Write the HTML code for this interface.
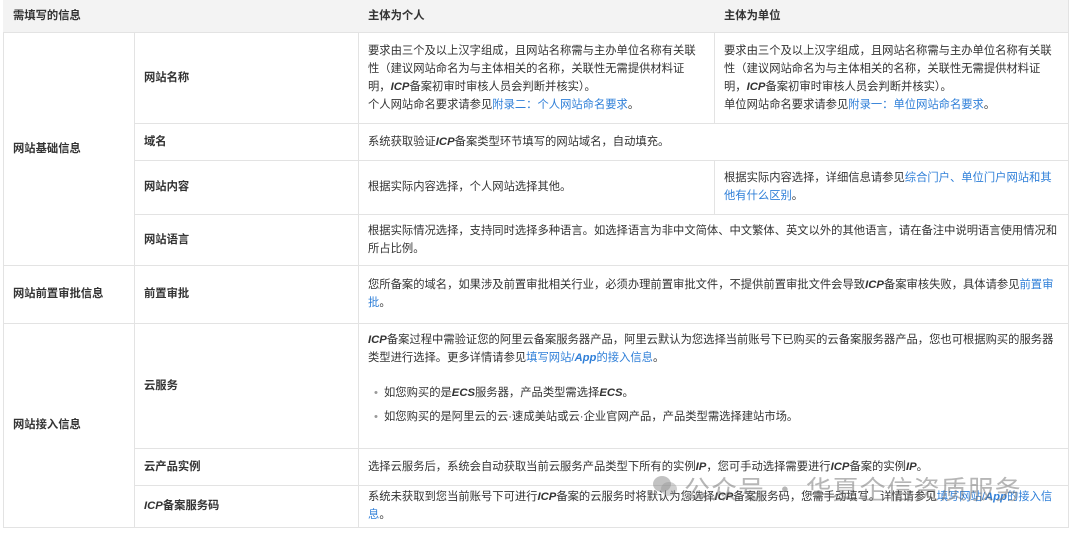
<!DOCTYPE html>
<html><head><meta charset="utf-8"><style>
*{margin:0;padding:0;box-sizing:border-box}
body{width:1080px;height:535px;background:#fff;font-family:"Liberation Sans","Noto Sans CJK SC",sans-serif;font-size:11.3px;color:#333;position:relative;overflow:hidden}
.c{position:absolute;border-right:1px solid #e3e3e3;border-bottom:1px solid #e3e3e3;padding:0 10px;display:flex;align-items:center;line-height:18px}
.c>div{width:100%}
.h{background:#f3f3f3;font-weight:bold;color:#333}
.b{font-weight:bold}
a{color:#2f7fd8;text-decoration:none}
i{font-weight:bold;font-style:italic}
ul{list-style:none;margin-top:17px}
li{position:relative;padding-left:16px;margin-top:6px}
li:first-child{margin-top:0}
li:before{content:"•";position:absolute;left:6px;color:#999}
.wm{position:absolute;left:684px;top:470px;font-size:26px;color:rgba(110,110,110,0.5);letter-spacing:1px;white-space:nowrap;font-family:"Noto Sans CJK SC",sans-serif}
</style></head><body>
<div style="position:absolute;left:3px;top:0;width:1066px;height:528px;border-left:1px solid #e3e3e3;border-top:1px solid #e3e3e3"></div>
<div class="c h" style="left:3px;top:0;width:356px;height:33px"><div>需填写的信息</div></div>
<div class="c h" style="left:358px;top:0;width:357px;height:33px"><div>主体为个人</div></div>
<div class="c h" style="left:714px;top:0;width:355px;height:33px"><div>主体为单位</div></div>

<div class="c b" style="left:3px;top:32px;width:132px;height:234px"><div>网站基础信息</div></div>
<div class="c b" style="left:134px;top:32px;width:225px;height:92px"><div>网站名称</div></div>
<div class="c" style="left:358px;top:32px;width:357px;height:92px"><div>要求由三个及以上汉字组成，且网站名称需与主办单位名称有关联性（建议网站命名为与主体相关的名称，关联性无需提供材料证明，<i>ICP</i>备案初审时审核人员会判断并核实）。<br>个人网站命名要求请参见<a>附录二：个人网站命名要求</a>。</div></div>
<div class="c" style="left:714px;top:32px;width:355px;height:92px"><div>要求由三个及以上汉字组成，且网站名称需与主办单位名称有关联性（建议网站命名为与主体相关的名称，关联性无需提供材料证明，<i>ICP</i>备案初审时审核人员会判断并核实）。<br>单位网站命名要求请参见<a>附录一：单位网站命名要求</a>。</div></div>
<div class="c b" style="left:134px;top:123px;width:225px;height:38px"><div>域名</div></div>
<div class="c" style="left:358px;top:123px;width:711px;height:38px"><div>系统获取验证<i>ICP</i>备案类型环节填写的网站域名，自动填充。</div></div>
<div class="c b" style="left:134px;top:160px;width:225px;height:55px"><div>网站内容</div></div>
<div class="c" style="left:358px;top:160px;width:357px;height:55px"><div>根据实际内容选择，个人网站选择其他。</div></div>
<div class="c" style="left:714px;top:160px;width:355px;height:55px"><div>根据实际内容选择，详细信息请参见<a>综合门户、单位门户网站和其他有什么区别</a>。</div></div>
<div class="c b" style="left:134px;top:214px;width:225px;height:52px"><div>网站语言</div></div>
<div class="c" style="left:358px;top:214px;width:711px;height:52px"><div>根据实际情况选择，支持同时选择多种语言。如选择语言为非中文简体、中文繁体、英文以外的其他语言，请在备注中说明语言使用情况和所占比例。</div></div>

<div class="c b" style="left:3px;top:265px;width:132px;height:59px"><div>网站前置审批信息</div></div>
<div class="c b" style="left:134px;top:265px;width:225px;height:59px"><div>前置审批</div></div>
<div class="c" style="left:358px;top:265px;width:711px;height:59px"><div>您所备案的域名，如果涉及前置审批相关行业，必须办理前置审批文件，不提供前置审批文件会导致<i>ICP</i>备案审核失败，具体请参见<a>前置审批</a>。</div></div>

<div class="c b" style="left:3px;top:323px;width:132px;height:205px"><div>网站接入信息</div></div>
<div class="c b" style="left:134px;top:323px;width:225px;height:126px"><div>云服务</div></div>
<div class="c" style="left:358px;top:323px;width:711px;height:126px;align-items:flex-start;padding-top:8px"><div><i>ICP</i>备案过程中需验证您的阿里云备案服务器产品，阿里云默认为您选择当前账号下已购买的云备案服务器产品，您也可根据购买的服务器类型进行选择。更多详情请参见<a>填写网站/<i>App</i>的接入信息</a>。<ul><li>如您购买的是<i>ECS</i>服务器，产品类型需选择<i>ECS</i>。</li><li>如您购买的是阿里云的云·速成美站或云·企业官网产品，产品类型需选择建站市场。</li></ul></div></div>
<div class="c b" style="left:134px;top:448px;width:225px;height:38px"><div>云产品实例</div></div>
<div class="c" style="left:358px;top:448px;width:711px;height:38px"><div>选择云服务后，系统会自动获取当前云服务产品类型下所有的实例<i>IP</i>，您可手动选择需要进行<i>ICP</i>备案的实例<i>IP</i>。</div></div>
<div class="c b" style="left:134px;top:485px;width:225px;height:43px"><div><i>ICP</i>备案服务码</div></div>
<div class="c" style="left:358px;top:485px;width:711px;height:43px"><div>系统未获取到您当前账号下可进行<i>ICP</i>备案的云服务时将默认为您选择<i>ICP</i>备案服务码，您需手动填写。详情请参见<a>填写网站/<i>App</i>的接入信息</a>。</div></div>

<svg style="position:absolute;left:652px;top:474px" width="26" height="24" viewBox="0 0 26 24"><ellipse cx="10" cy="10" rx="9" ry="8" fill="rgba(120,120,120,0.45)"/><ellipse cx="17" cy="15" rx="8" ry="7" fill="rgba(150,150,150,0.45)"/></svg>
<div class="wm">公众号 · 华夏企信资质服务</div>
</body></html>
